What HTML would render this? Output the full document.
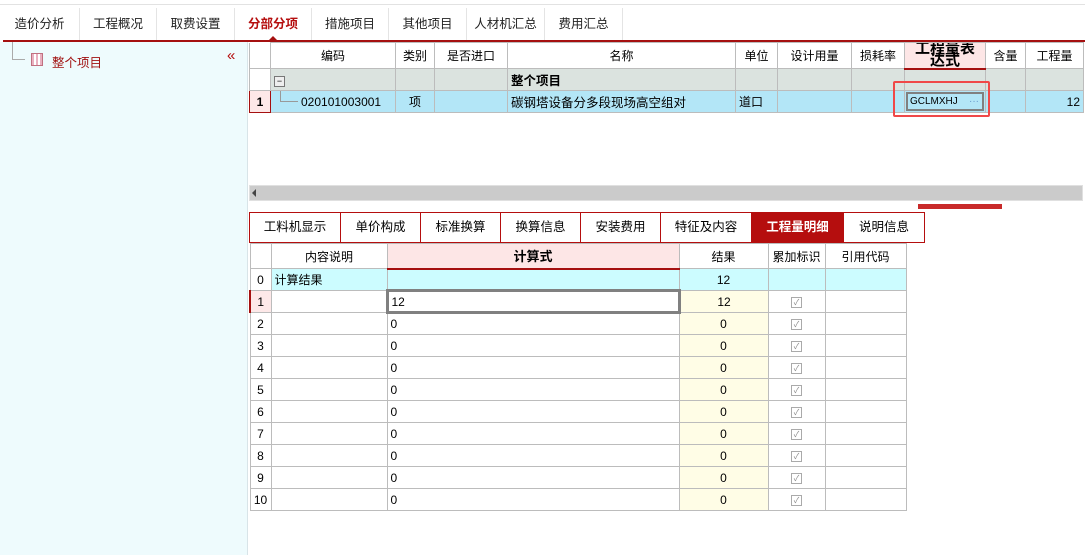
<!DOCTYPE html>
<html><head><meta charset="utf-8"><style>
*{margin:0;padding:0;box-sizing:border-box}
body{width:1085px;height:555px;overflow:hidden;background:#fff;font-family:"Liberation Sans","Noto Sans CJK SC",sans-serif;font-size:12px;color:#000;position:relative}
.a{position:absolute}
.tab{position:absolute;top:8px;height:32px;line-height:32px;text-align:center;font-size:12.5px;color:#222;border-right:1px solid #e4e4e4}
table{border-collapse:collapse;table-layout:fixed;position:absolute}
td{border:1px solid #bcbcbc;height:22px;padding:0 3px;white-space:nowrap;overflow:hidden;font-size:12px}
.c{text-align:center}.r{text-align:right}
.chk{display:inline-block;width:11px;height:11px;border:1px solid #aaa;font-size:8px;line-height:9px;color:#888;text-align:center;vertical-align:middle}
.lt{position:absolute;top:213px;height:29px;line-height:29px;text-align:center;border-right:1px solid #b50e0e;font-size:12.5px}
</style></head><body>
<div class="a" style="left:0;top:4px;width:1085px;height:1px;background:#e2e2e2"></div>
<div class="tab" style="left:0;width:80px">造价分析</div>
<div class="tab" style="left:80px;width:77px">工程概况</div>
<div class="tab" style="left:157px;width:78px">取费设置</div>
<div class="tab" style="left:235px;width:77px;color:#b50e0e;font-weight:bold">分部分项</div>
<div class="tab" style="left:312px;width:77px">措施项目</div>
<div class="tab" style="left:389px;width:78px">其他项目</div>
<div class="tab" style="left:467px;width:78px">人材机汇总</div>
<div class="tab" style="left:545px;width:78px">费用汇总</div>
<div class="a" style="left:3px;top:40px;width:1082px;height:2px;background:#a51010"></div>
<div class="a" style="left:269px;top:36px;width:0;height:0;border-left:4px solid transparent;border-right:4px solid transparent;border-bottom:4px solid #a51010"></div>

<div class="a" style="left:0;top:42px;width:248px;height:513px;background:#eefbfd;border-right:1px solid #d8e4e8"></div>
<div class="a" style="left:12px;top:42px;width:1px;height:17px;background:#aaa"></div>
<div class="a" style="left:12px;top:59px;width:13px;height:1px;background:#aaa"></div>
<div class="a" style="left:31px;top:53px;width:12px;height:13px;border:1px solid #c07080;background:repeating-linear-gradient(90deg,#e9b0c0 0 2px,#fff 2px 4px)"></div>
<div class="a" style="left:52px;top:52px;color:#a01010;font-size:12.5px">整个项目</div>
<div class="a" style="left:227px;top:47px;color:#b50e0e;font-size:15px">«</div>

<table style="left:249px;top:42px;width:834px">
<col style="width:21px"><col style="width:125px"><col style="width:39px"><col style="width:73px"><col style="width:228px"><col style="width:42px"><col style="width:74px"><col style="width:53px"><col style="width:81px"><col style="width:40px"><col style="width:58px">
<tr style="height:26px"><td style="border-top:none"></td><td class="c">编码</td><td class="c">类别</td><td class="c">是否进口</td><td class="c">名称</td><td class="c">单位</td><td class="c">设计用量</td><td class="c">损耗率</td><td class="c" style="background:#fde6e6;border-bottom:2px solid #a51010;font-weight:bold;font-size:15px;line-height:12px;padding:0 4px;white-space:normal;overflow:hidden;vertical-align:top">工程量表达式</td><td class="c">含量</td><td class="c">工程量</td></tr>
<tr style="background:#dbe3df;height:21px"><td style="background:#fff"></td><td><span style="display:inline-block;width:11px;height:11px;border:1px solid #777;background:#eee;font-size:9px;line-height:8px;text-align:center">−</span></td><td></td><td></td><td style="font-weight:bold;font-size:12.5px">整个项目</td><td></td><td></td><td></td><td></td><td></td><td></td></tr>
<tr style="background:#b3e6f7;height:22px"><td class="c" style="background:#fde8e8;border:1px solid #a51010;font-weight:bold">1</td><td style="padding-left:30px;position:relative"><span style="position:absolute;left:9px;top:0;width:1px;height:10px;background:#999"></span><span style="position:absolute;left:9px;top:10px;width:18px;height:1px;background:#999"></span>020101003001</td><td class="c">项</td><td></td><td style="font-size:12.5px">碳钢塔设备分多段现场高空组对</td><td>道口</td><td></td><td></td><td style="padding:0"><div style="margin:1px;border:2px solid #808080;height:19px;line-height:15px;font-size:10px;padding-left:2px;background:#b3e6f7">GCLMXHJ <span style="float:right;color:#6a9acc;padding-right:3px">···</span></div></td><td></td><td class="r">12</td></tr>
</table>
<div class="a" style="left:893px;top:81px;width:97px;height:36px;border:2px solid #f04848;border-radius:2px"></div>

<div class="a" style="left:249px;top:185px;width:834px;height:16px;background:#cbcbcb;border:1px solid #e0e0e0"></div>
<div class="a" style="left:252px;top:189px;width:0;height:0;border-top:4px solid transparent;border-bottom:4px solid transparent;border-right:4px solid #444"></div>
<div class="a" style="left:918px;top:204px;width:84px;height:5px;background:#c82a2a"></div>

<div class="a" style="left:249px;top:212px;width:676px;height:31px;border-top:1px solid #b50e0e;border-bottom:1px solid #b50e0e;border-left:1px solid #b50e0e"></div>
<div class="lt" style="left:250px;width:91px">工料机显示</div>
<div class="lt" style="left:341px;width:80px">单价构成</div>
<div class="lt" style="left:421px;width:80px">标准换算</div>
<div class="lt" style="left:501px;width:80px">换算信息</div>
<div class="lt" style="left:581px;width:80px">安装费用</div>
<div class="lt" style="left:661px;width:91px">特征及内容</div>
<div class="lt" style="left:752px;width:92px;background:#b50e0e;color:#fff;font-weight:bold">工程量明细</div>
<div class="lt" style="left:844px;width:81px">说明信息</div>

<table style="left:249px;top:243px;width:656px">
<col style="width:21px"><col style="width:116px"><col style="width:292px"><col style="width:89px"><col style="width:57px"><col style="width:81px">
<tr style="height:25px"><td></td><td class="c">内容说明</td><td class="c" style="background:#fde6e6;border-bottom:2px solid #a51010;font-weight:bold;font-size:13px">计算式</td><td class="c">结果</td><td class="c">累加标识</td><td class="c">引用代码</td></tr>
<tr style="background:#ccfcff"><td class="c" style="background:#fff">0</td><td>计算结果</td><td></td><td class="c">12</td><td></td><td></td></tr>
<tr><td class="c" style="background:#fde8e8;border-left:2px solid #a51010">1</td><td></td><td style="border:3px solid #808080">12</td><td class="c" style="background:#fffde6">12</td><td class="c"><span class="chk">✓</span></td><td></td></tr>
<tr><td class="c">2</td><td></td><td>0</td><td class="c" style="background:#fffde6">0</td><td class="c"><span class="chk">✓</span></td><td></td></tr>
<tr><td class="c">3</td><td></td><td>0</td><td class="c" style="background:#fffde6">0</td><td class="c"><span class="chk">✓</span></td><td></td></tr>
<tr><td class="c">4</td><td></td><td>0</td><td class="c" style="background:#fffde6">0</td><td class="c"><span class="chk">✓</span></td><td></td></tr>
<tr><td class="c">5</td><td></td><td>0</td><td class="c" style="background:#fffde6">0</td><td class="c"><span class="chk">✓</span></td><td></td></tr>
<tr><td class="c">6</td><td></td><td>0</td><td class="c" style="background:#fffde6">0</td><td class="c"><span class="chk">✓</span></td><td></td></tr>
<tr><td class="c">7</td><td></td><td>0</td><td class="c" style="background:#fffde6">0</td><td class="c"><span class="chk">✓</span></td><td></td></tr>
<tr><td class="c">8</td><td></td><td>0</td><td class="c" style="background:#fffde6">0</td><td class="c"><span class="chk">✓</span></td><td></td></tr>
<tr><td class="c">9</td><td></td><td>0</td><td class="c" style="background:#fffde6">0</td><td class="c"><span class="chk">✓</span></td><td></td></tr>
<tr><td class="c">10</td><td></td><td>0</td><td class="c" style="background:#fffde6">0</td><td class="c"><span class="chk">✓</span></td><td></td></tr>
</table>
</body></html>
